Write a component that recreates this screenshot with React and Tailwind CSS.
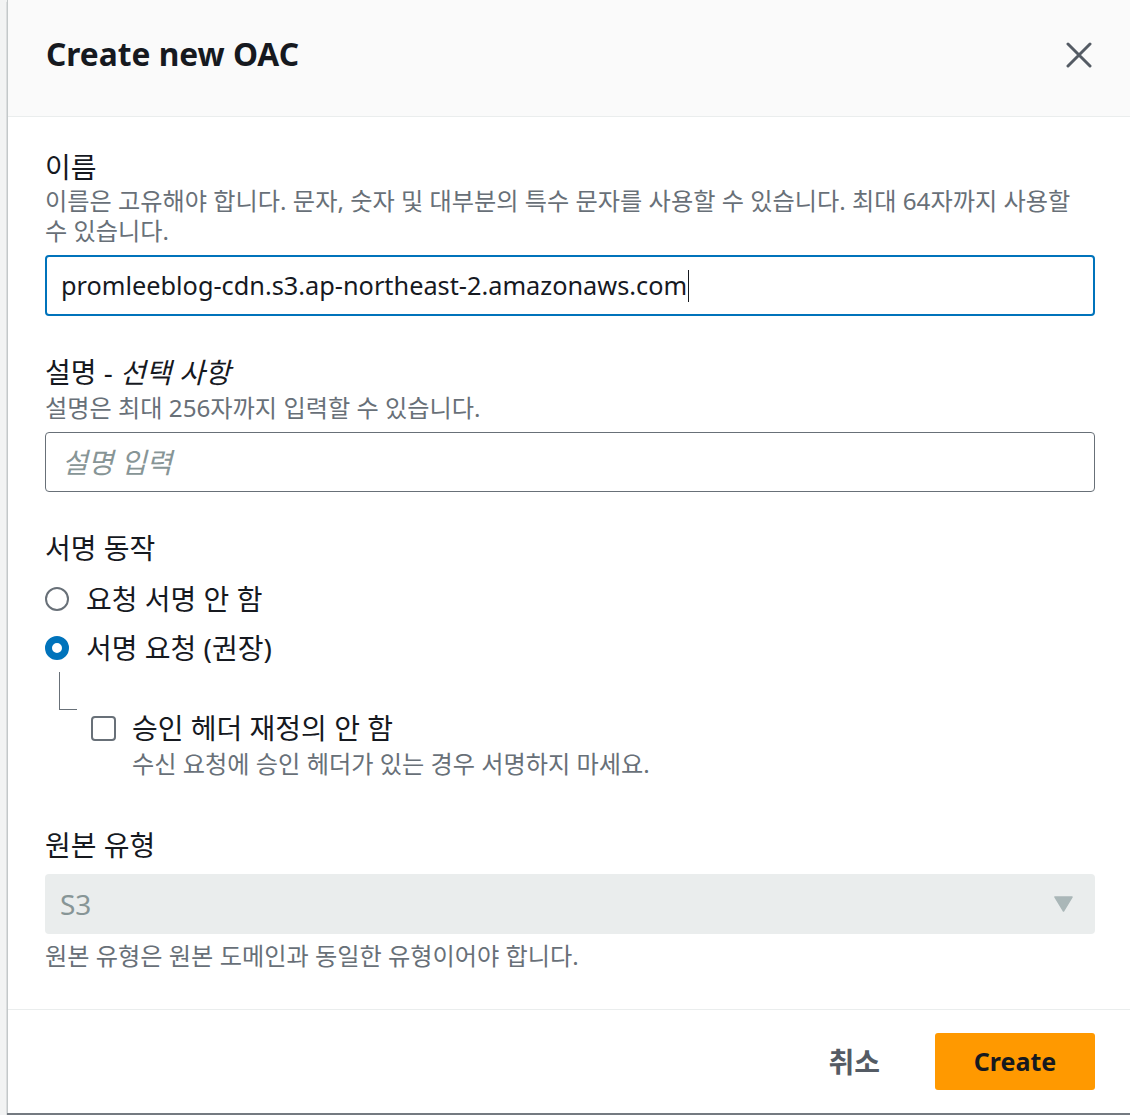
import { useState } from 'react';

function Radio({ checked, label }) {
  return (
    <label className="flex items-center gap-[17px] h-[49px]">
      {checked ? (
        <span className="w-[24px] h-[24px] rounded-full border-[7px] border-[#0073bb] bg-white shrink-0" />
      ) : (
        <span className="w-[24px] h-[24px] rounded-full border-2 border-[#687078] bg-white shrink-0" />
      )}
      <span className="text-[28px] leading-[34px] text-[#16191f]">{label}</span>
    </label>
  );
}

export default function App() {
  const [name] = useState('promleeblog-cdn.s3.ap-northeast-2.amazonaws.com');

  return (
    <div className="w-[1130px] h-[1115px] bg-[#f2f3f3] overflow-hidden font-['Noto_Sans','Noto_Sans_CJK_KR',sans-serif]">
      <div className="ml-[7px] w-[1126px] h-[1113px] bg-white border-l border-[#c3c8c9] shadow-[0_2px_1px_rgba(84,91,100,0.8)] flex flex-col">
        {/* Header */}
        <div className="h-[117px] shrink-0 bg-[#fafafa] border-b border-[#eaeded] flex items-center justify-between pl-[38px] pr-[41px]">
          <h2 className="text-[31.7px] font-bold text-[#16191f] leading-none -mt-[8px]">Create new OAC</h2>
          <svg width="26" height="26" viewBox="0 0 26 26" className="-mt-[6px]">
            <path d="M2 2 L24 24 M24 2 L2 24" stroke="#545b64" strokeWidth="3" strokeLinecap="round" />
          </svg>
        </div>

        {/* Body */}
        <div className="flex-1 pl-[37px] pr-[38px] pt-[33px]">
          {/* Name */}
          <div className="text-[28px] leading-[34px] text-[#16191f]">이름</div>
          <div className="text-[24.2px] leading-[30px] text-[#687078] mt-[2px]">
            이름은 고유해야 합니다. 문자, 숫자 및 대부분의 특수 문자를 사용할 수 있습니다. 최대 64자까지 사용할<br />수 있습니다.
          </div>
          <div className="mt-[9px] h-[61px] border-2 border-[#0073bb] rounded-[4px] flex items-center px-[14px]">
            <span className="text-[25.3px] text-[#16191f]">{name}</span>
            <span className="w-px h-[32px] bg-[#16191f] ml-px" />
          </div>

          {/* Description */}
          <div className="mt-[39px] text-[28px] leading-[34px] text-[#16191f]">
            설명 - <i>선택 사항</i>
          </div>
          <div className="text-[24.2px] leading-[30px] text-[#687078] mt-[4px]">설명은 최대 256자까지 입력할 수 있습니다.</div>
          <div className="mt-[9px] h-[60px] border border-[#687078] rounded-[4px] flex items-center px-[16px]">
            <span className="text-[28px] italic text-[#879596]">설명 입력</span>
          </div>

          {/* Signing */}
          <div className="mt-[39px] text-[28px] leading-[34px] text-[#16191f]">서명 동작</div>
          <div className="mt-[9px] flex flex-col">
            <Radio label="요청 서명 안 함" />
            <Radio checked label="서명 요청 (권장)" />
          </div>
          <div className="flex">
            <div className="ml-[14px] w-[18px] h-[38px] border-l border-b border-[#687078]" />
          </div>
          <div className="flex gap-[16px] ml-[46px] mt-[1px]">
            <span className="mt-[5px] w-[25px] h-[25px] rounded-[4px] border-2 border-[#687078] bg-white shrink-0" />
            <div>
              <div className="text-[28px] leading-[34px] text-[#16191f]">승인 헤더 재정의 안 함</div>
              <div className="text-[24.2px] leading-[30px] text-[#687078] mt-[4px]">수신 요청에 승인 헤더가 있는 경우 서명하지 마세요.</div>
            </div>
          </div>

          {/* Origin type */}
          <div className="mt-[49px] text-[28px] leading-[34px] text-[#16191f]">원본 유형</div>
          <div className="mt-[12px] h-[60px] bg-[#eaeded] rounded-[4px] flex items-center justify-between pl-[15px] pr-[22px]">
            <span className="text-[28px] text-[#879596]">S3</span>
            <svg width="19" height="16" viewBox="0 0 19 16">
              <path d="M1 1 H18 L9.5 15 Z" fill="#aab7b8" stroke="#aab7b8" strokeWidth="1.5" strokeLinejoin="round" />
            </svg>
          </div>
          <div className="text-[24.2px] leading-[30px] text-[#687078] mt-[7px]">원본 유형은 원본 도메인과 동일한 유형이어야 합니다.</div>
        </div>

        {/* Footer */}
        <div className="h-[104px] shrink-0 border-t border-[#eaeded] flex items-center justify-end pr-[38px] -mt-px">
          <button className="px-[20px] text-[28px] font-bold text-[#545b64] mr-[35px]">취소</button>
          <button className="w-[160px] h-[57px] bg-[#ff9900] rounded-[3px] text-[25px] font-bold text-[#16191f]">Create</button>
        </div>
      </div>
    </div>
  );
}
